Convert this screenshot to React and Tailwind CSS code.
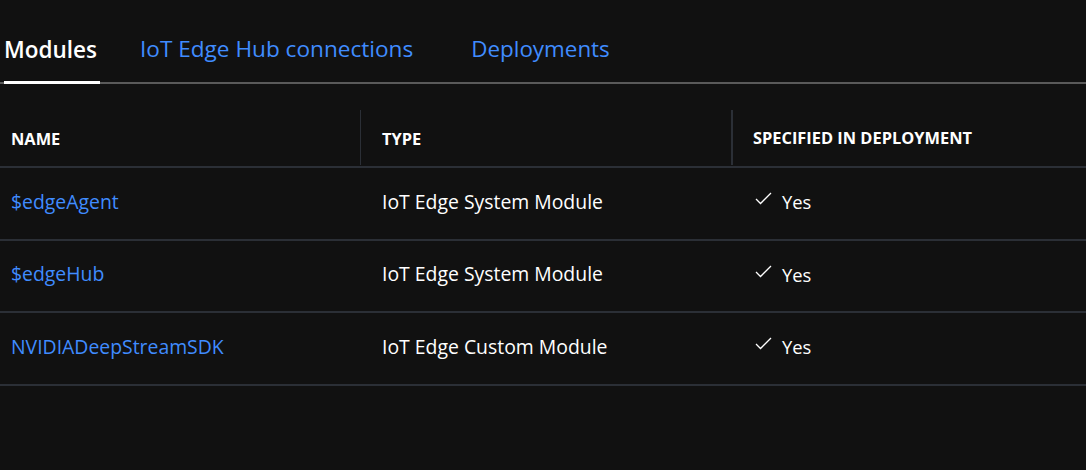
const rows = [
  ["$edgeAgent", "IoT Edge System Module"],
  ["$edgeHub", "IoT Edge System Module"],
  ["NVIDIADeepStreamSDK", "IoT Edge Custom Module"],
];
const Check = () => (
  <svg width="17" height="13" viewBox="0 0 17 13" fill="none" stroke="#fff" strokeWidth="1.3" className="ml-[2px] mr-[10px] -mt-[5px]">
    <path d="M1 7 L5.5 11.5 L16 1" />
  </svg>
);
export default function App() {
  return (
    <div className="w-[1086px] h-[470px] bg-[#111111] text-white overflow-hidden font-['Segoe_UI','Open_Sans','Noto_Sans',sans-serif]">
      <div className="h-[84px] border-b-2 border-[#5a5a5a] flex items-end text-[#408cff] text-[22.6px]">
        <div className="ml-1 w-[96px] h-[84px] -mb-[2px] border-b-[3px] border-white text-white text-[22.5px] font-semibold flex items-center pt-[18px]">Modules</div>
        <div className="ml-10 h-[84px] flex items-center pt-[18px]">IoT Edge Hub connections</div>
        <div className="ml-[58px] h-[84px] flex items-center pt-[18px] text-[22.4px]">Deployments</div>
      </div>
      <div className="mt-[26px] h-[58px] flex items-center border-b-2 border-[#2b2f36] text-[16.4px] font-bold">
        <div className="w-[361px] h-[55px] self-start pl-[11px] flex items-center border-r border-[#2b2f36]"><span className="mt-[3px]">NAME</span></div>
        <div className="w-[372px] h-[55px] self-start pl-[21px] flex items-center border-r-2 border-[#2b2f36]"><span className="mt-[3px]">TYPE</span></div>
        <div className="pl-5 mt-[1px]">SPECIFIED IN DEPLOYMENT</div>
      </div>
      {rows.map(([n, t]) => (
        <div key={n} className="h-[72.5px] flex items-center border-b-2 border-[#2b2f36] text-[19.4px]">
          <div className="w-[361px] pl-[11px] -mt-[4px] text-[#408cff]">{n}</div>
          <div className="w-[372px] pl-[21px] -mt-[4px]">{t}</div>
          <div className="pl-5 flex items-center -mt-[4px] text-[18.4px]"><Check /><span className="mt-[2px]">Yes</span></div>
        </div>
      ))}
    </div>
  );
}
